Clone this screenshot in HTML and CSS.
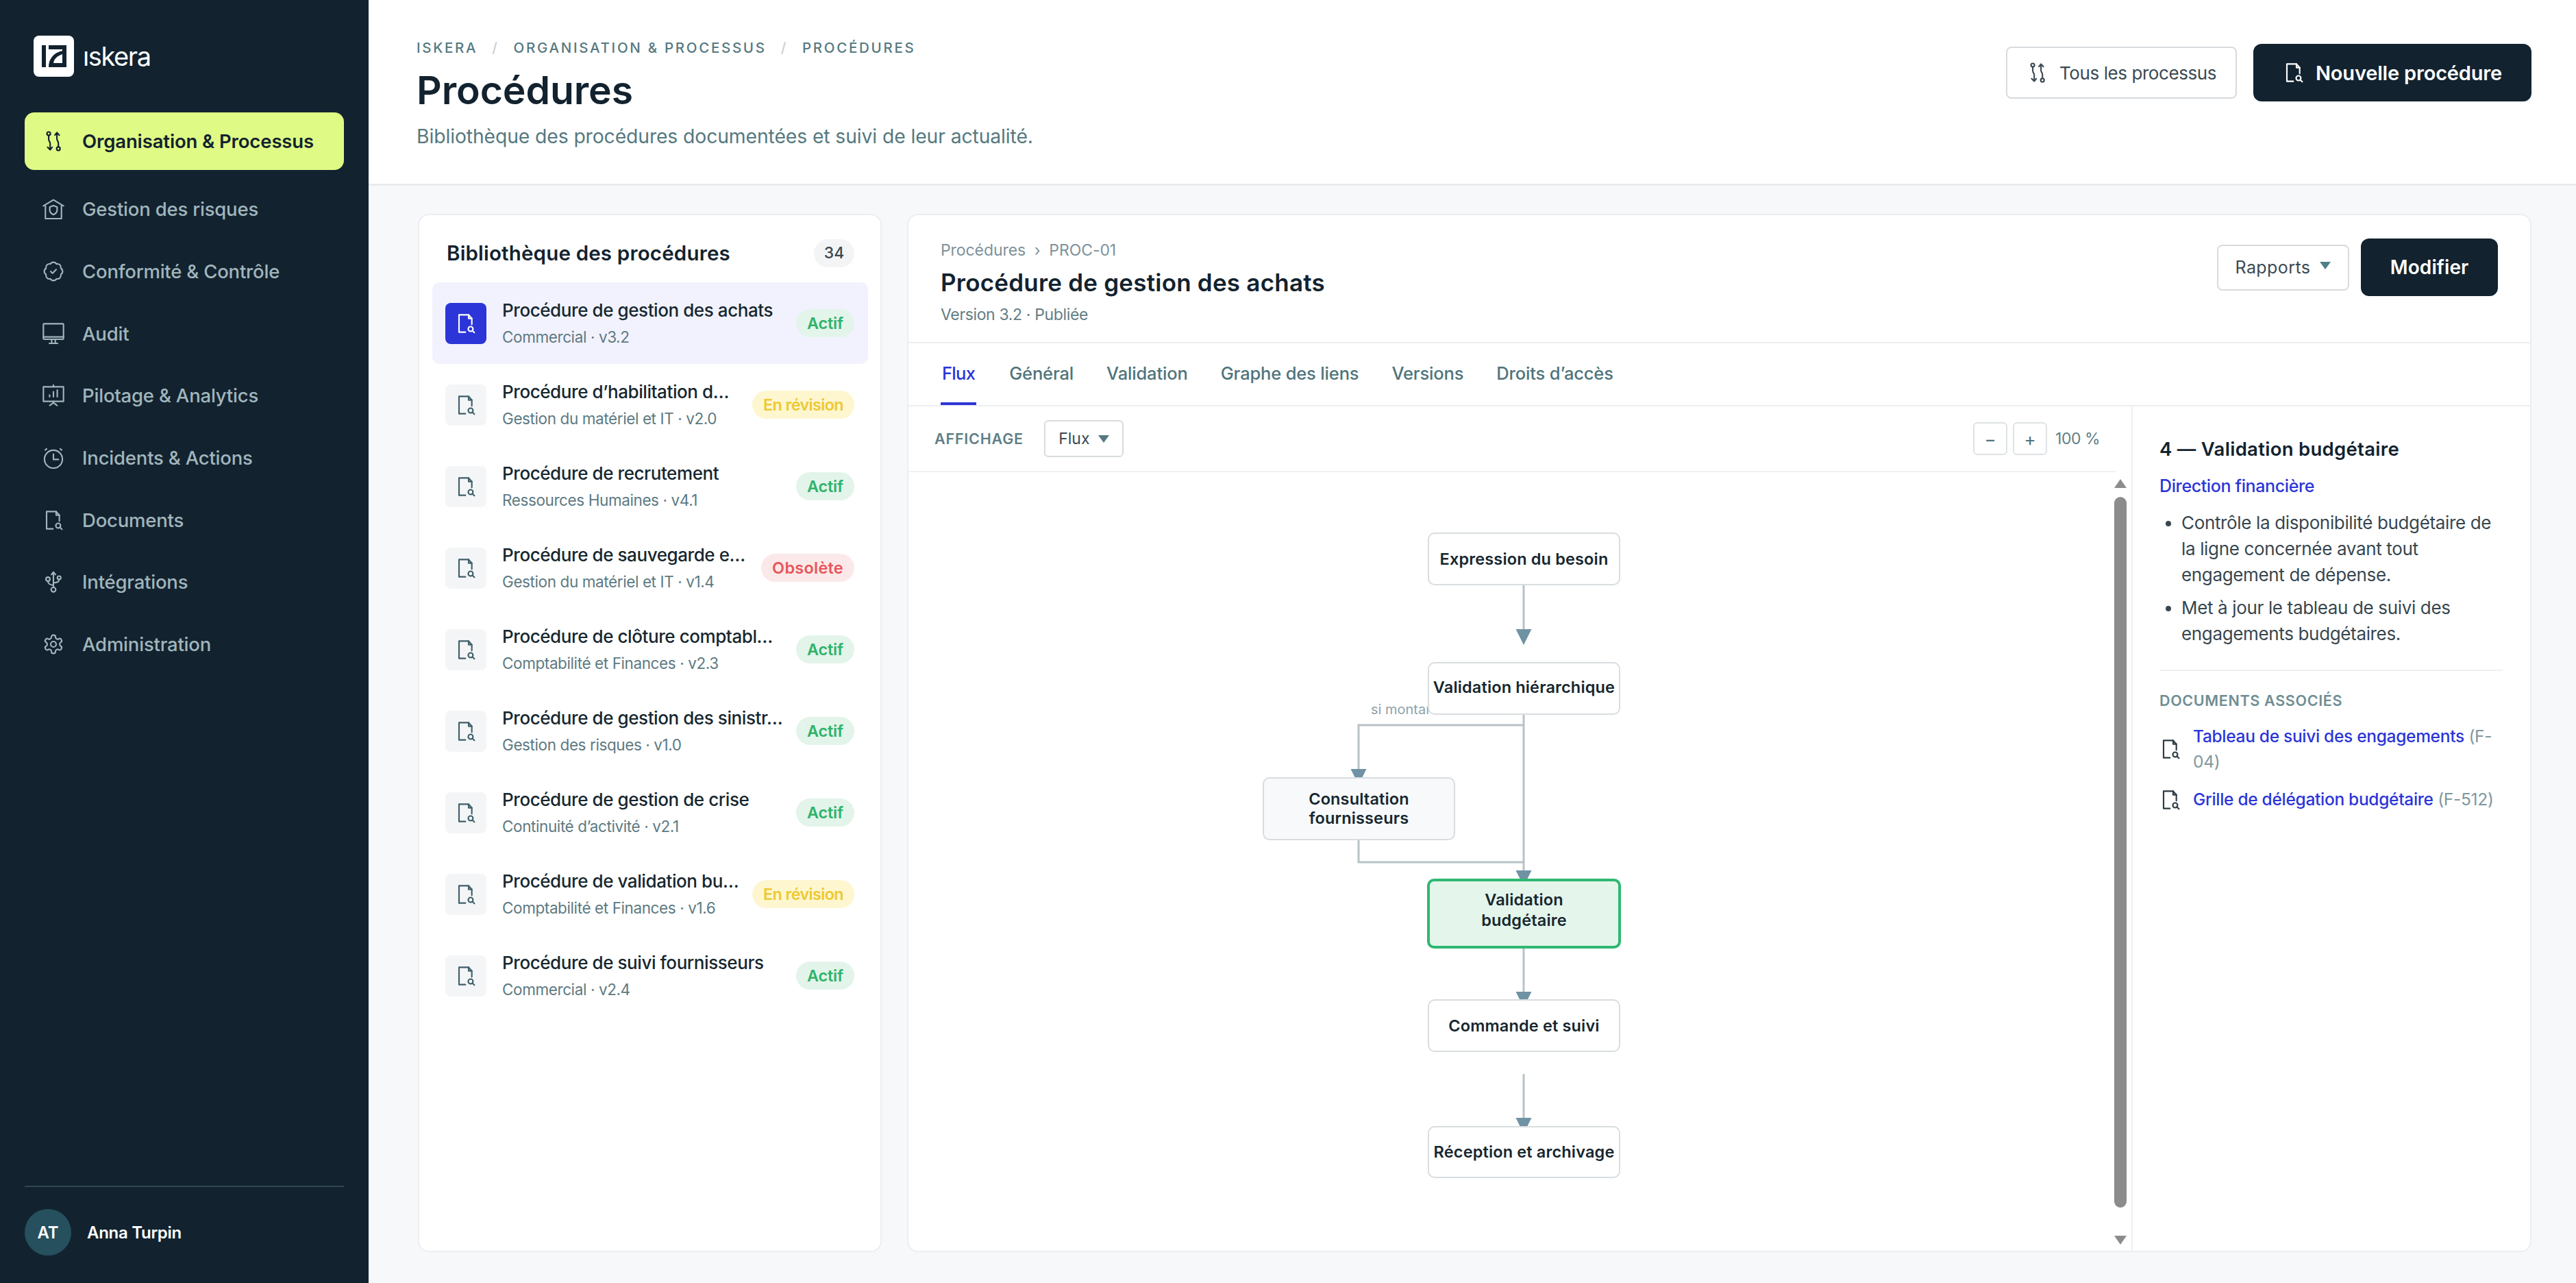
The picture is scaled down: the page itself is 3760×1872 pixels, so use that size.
FILE: index.html
```html
<!DOCTYPE html>
<html lang="fr">
<head>
<meta charset="utf-8">
<title>Procédures — Iskera</title>
<link rel="stylesheet" href="styles.css">
</head>
<body>
<svg class="defs" aria-hidden="true">
  <symbol id="i-doc" viewBox="0 0 24 24"><path d="M11.5 21.5H4.5V2.5H15L18.5 6.5V13"/><path d="M15 2.5V6.5H18.5"/><circle cx="17.2" cy="18" r="2.6"/><path d="M19.1 19.9L21.3 22"/></symbol>
  <symbol id="i-proc" viewBox="0 0 24 24"><circle cx="6.8" cy="3.8" r="1.9"/><path d="M6.8 5.7V10c0 2 1.6 2.6 1.6 4.6V21"/><path d="M5.6 18.6L8.4 21.4 10.6 18.6"/><circle cx="17.4" cy="20.2" r="1.9"/><path d="M17.4 18.3V14c0-2-1.6-2.6-1.6-4.6V3"/><path d="M13.6 5.4L15.8 2.6 18.4 5.4"/></symbol>
  <symbol id="i-risk" viewBox="0 0 24 24"><path d="M1 8.5L12 2l11 6.500"/><path d="M3.200 8.500V22.500H20.800V8.500"/><path d="M12 8.300l4 1.500v3.600c0 2.600-2 3.900-4 4.800-2-.9-4-2.200-4-4.800V9.800z"/></symbol>
  <symbol id="i-check" viewBox="0 0 24 24"><path d="M3.850 8.620a4 4 0 0 1 4.780-4.770 4 4 0 0 1 6.740 0 4 4 0 0 1 4.780 4.780 4 4 0 0 1 0 6.740 4 4 0 0 1-4.770 4.780 4 4 0 0 1-6.750 0 4 4 0 0 1-4.780-4.770 4 4 0 0 1 0-6.760Z"/><path d="M9 12l2 2 4-4"/></symbol>
  <symbol id="i-monitor" viewBox="0 0 24 24"><rect x="1" y="1" width="22" height="17" rx="0.800"/><path d="M1 15.500H23M10 18v4M14 18v4M7.500 22.500h9"/></symbol>
  <symbol id="i-chart" viewBox="0 0 24 24"><path d="M12 0v2.500"/><rect x="1" y="2.500" width="22" height="16"/><path d="M7.800 13.500v-2M12 13.500V8M16.200 13.500V6"/><path d="M12 18.500v1.500M8 23l4-3 4 3"/></symbol>
  <symbol id="i-alarm" viewBox="0 0 24 24"><circle cx="12" cy="13.500" r="9.800"/><path d="M12 8v5.800h5.500M4.500 2.200L3 3.500M19.500 2.200L21 3.500"/></symbol>
  <symbol id="i-usb" viewBox="0 0 24 24"><path d="M12 18V1.500M9.800 4L12 1.300 14.200 4"/><circle cx="12" cy="20.500" r="2.500"/><circle cx="6" cy="9" r="2.200"/><path d="M6 11.200c0 2.600 2.600 4.300 6 4.300"/><circle cx="18.200" cy="7.500" r="1.900"/><path d="M18.200 9.400c0 2.800-2.600 3.600-6.200 3.600"/></symbol>
  <symbol id="i-gear" viewBox="0 0 24 24"><path d="M12.220 2h-.44a2 2 0 0 0-2 2v.18a2 2 0 0 1-1 1.730l-.43.250a2 2 0 0 1-2 0l-.15-.08a2 2 0 0 0-2.730.730l-.22.380a2 2 0 0 0 .730 2.730l.15.100a2 2 0 0 1 1 1.720v.510a2 2 0 0 1-1 1.740l-.15.090a2 2 0 0 0-.730 2.730l.22.380a2 2 0 0 0 2.730.730l.15-.08a2 2 0 0 1 2 0l.43.250a2 2 0 0 1 1 1.730V20a2 2 0 0 0 2 2h.44a2 2 0 0 0 2-2v-.18a2 2 0 0 1 1-1.730l.43-.25a2 2 0 0 1 2 0l.15.080a2 2 0 0 0 2.730-.730l.22-.39a2 2 0 0 0-.73-2.730l-.15-.08a2 2 0 0 1-1-1.740v-.5a2 2 0 0 1 1-1.740l.15-.09a2 2 0 0 0 .73-2.730l-.22-.38a2 2 0 0 0-2.730-.73l-.15.08a2 2 0 0 1-2 0l-.43-.25a2 2 0 0 1-1-1.730V4a2 2 0 0 0-2-2z"/><circle cx="12" cy="12" r="3"/></symbol>
</svg>
<div class="app">
  <aside class="sidebar">
    <div class="brand">
      <svg class="brand-mark" viewBox="0 0 59 60"><rect width="59" height="60" rx="8" fill="#fff"/><rect x="12" y="14" width="6" height="32" fill="#12232f"/><path d="M22 14h26v32H22c0-12 7-21 20-24v-2H22z" fill="#12232f"/><path d="M29 40c1-6 5-10 13-13v13z" fill="#fff"/></svg>
      <span class="brand-name">ıskera</span>
    </div>
    <nav class="nav">
      <a class="nav-item active"><svg class="ico"><use href="#i-proc"/></svg><span>Organisation &amp; Processus</span></a>
      <a class="nav-item"><svg class="ico"><use href="#i-risk"/></svg><span>Gestion des risques</span></a>
      <a class="nav-item"><svg class="ico"><use href="#i-check"/></svg><span>Conformité &amp; Contrôle</span></a>
      <a class="nav-item"><svg class="ico"><use href="#i-monitor"/></svg><span>Audit</span></a>
      <a class="nav-item"><svg class="ico"><use href="#i-chart"/></svg><span>Pilotage &amp; Analytics</span></a>
      <a class="nav-item"><svg class="ico"><use href="#i-alarm"/></svg><span>Incidents &amp; Actions</span></a>
      <a class="nav-item"><svg class="ico"><use href="#i-doc"/></svg><span>Documents</span></a>
      <a class="nav-item"><svg class="ico"><use href="#i-usb"/></svg><span>Intégrations</span></a>
      <a class="nav-item"><svg class="ico"><use href="#i-gear"/></svg><span>Administration</span></a>
    </nav>
    <div class="user">
      <span class="avatar">AT</span>
      <span class="user-name">Anna Turpin</span>
    </div>
  </aside>
  <main class="main">
    <header class="page-head">
      <div class="page-head-text">
        <div class="crumbs"><span>ISKERA</span><i>/</i><span>ORGANISATION &amp; PROCESSUS</span><i>/</i><span>PROCÉDURES</span></div>
        <h1 class="page-title">Procédures</h1>
        <p class="page-sub">Bibliothèque des procédures documentées et suivi de leur actualité.</p>
      </div>
      <div class="page-actions">
        <button class="btn-ghost"><svg class="ico-btn"><use href="#i-proc"/></svg><span>Tous les processus</span></button>
        <button class="btn-dark"><svg class="ico-btn"><use href="#i-doc"/></svg><span>Nouvelle procédure</span></button>
      </div>
    </header>
    <div class="content">
      <section class="library">
        <div class="lib-head"><h2 class="lib-title">Bibliothèque des procédures</h2><span class="count">34</span></div>
        <ul class="proc-list">
          <li class="proc current"><span class="proc-ico"><svg><use href="#i-doc"/></svg></span><div class="proc-text"><div class="proc-name">Procédure de gestion des achats</div><div class="proc-meta">Commercial · v3.2</div></div><span class="badge ok">Actif</span></li>
          <li class="proc"><span class="proc-ico"><svg><use href="#i-doc"/></svg></span><div class="proc-text"><div class="proc-name">Procédure d’habilitation d…</div><div class="proc-meta">Gestion du matériel et IT · v2.0</div></div><span class="badge warn">En révision</span></li>
          <li class="proc"><span class="proc-ico"><svg><use href="#i-doc"/></svg></span><div class="proc-text"><div class="proc-name">Procédure de recrutement</div><div class="proc-meta">Ressources Humaines · v4.1</div></div><span class="badge ok">Actif</span></li>
          <li class="proc"><span class="proc-ico"><svg><use href="#i-doc"/></svg></span><div class="proc-text"><div class="proc-name">Procédure de sauvegarde e…</div><div class="proc-meta">Gestion du matériel et IT · v1.4</div></div><span class="badge bad">Obsolète</span></li>
          <li class="proc"><span class="proc-ico"><svg><use href="#i-doc"/></svg></span><div class="proc-text"><div class="proc-name">Procédure de clôture comptabl…</div><div class="proc-meta">Comptabilité et Finances · v2.3</div></div><span class="badge ok">Actif</span></li>
          <li class="proc"><span class="proc-ico"><svg><use href="#i-doc"/></svg></span><div class="proc-text"><div class="proc-name">Procédure de gestion des sinistr…</div><div class="proc-meta">Gestion des risques · v1.0</div></div><span class="badge ok">Actif</span></li>
          <li class="proc"><span class="proc-ico"><svg><use href="#i-doc"/></svg></span><div class="proc-text"><div class="proc-name">Procédure de gestion de crise</div><div class="proc-meta">Continuité d’activité · v2.1</div></div><span class="badge ok">Actif</span></li>
          <li class="proc"><span class="proc-ico"><svg><use href="#i-doc"/></svg></span><div class="proc-text"><div class="proc-name">Procédure de validation bu…</div><div class="proc-meta">Comptabilité et Finances · v1.6</div></div><span class="badge warn">En révision</span></li>
          <li class="proc"><span class="proc-ico"><svg><use href="#i-doc"/></svg></span><div class="proc-text"><div class="proc-name">Procédure de suivi fournisseurs</div><div class="proc-meta">Commercial · v2.4</div></div><span class="badge ok">Actif</span></li>
        </ul>
      </section>
      <section class="detail">
        <div class="detail-head">
          <div>
            <div class="detail-crumb">Procédures&nbsp; ›&nbsp; PROC-01</div>
            <h2 class="detail-title">Procédure de gestion des achats</h2>
            <div class="detail-version">Version 3.2 · Publiée</div>
          </div>
          <div class="detail-actions">
            <button class="btn-report"><span>Rapports</span><b class="caret"></b></button>
            <button class="btn-edit"><span>Modifier</span></button>
          </div>
        </div>
        <div class="tabs">
          <a class="tab active">Flux</a><a class="tab">Général</a><a class="tab">Validation</a><a class="tab">Graphe des liens</a><a class="tab">Versions</a><a class="tab">Droits d’accès</a>
        </div>
        <div class="detail-body">
          <div class="flow-col">
            <div class="toolbar">
              <span class="tool-label">AFFICHAGE</span>
              <span class="select">Flux<b class="caret"></b></span>
              <span class="tool-right">
                <button class="zoom-btn">−</button>
                <button class="zoom-btn">+</button>
                <span class="zoom-val">100 %</span>
              </span>
            </div>
            <div class="canvas">
              <span class="edge-label">si montant &gt; seuil</span>
              <svg class="edges" viewBox="0 0 1786 1136">
                <g class="edge-lines">
                  <path d="M898 165V231"/>
                  <path d="M898 353V584"/>
                  <path d="M898 369H657V435"/>
                  <path d="M657 537V569H898"/>
                  <path d="M898 695V760"/>
                  <path d="M898 878V944"/>
                </g>
                <g class="edge-heads">
                  <polygon points="886.500,229 909.500,229 898,252"/>
                  <polygon points="645.500,433 668.500,433 657,456"/>
                  <polygon points="886.500,581 909.500,581 898,604"/>
                  <polygon points="886.500,758 909.500,758 898,781"/>
                  <polygon points="886.500,942 909.500,942 898,965"/>
                </g>
              </svg>
              <div class="node n1"><span>Expression du besoin</span></div>
              <div class="node n2"><span>Validation hiérarchique</span></div>
              <div class="node n3"><span>Consultation<br>fournisseurs</span></div>
              <div class="node n4"><span>Validation<br>budgétaire</span></div>
              <div class="node n5"><span>Commande et suivi</span></div>
              <div class="node n6"><span>Réception et archivage</span></div>
              <div class="scrollbar"><b class="sb-up"></b><b class="sb-thumb"></b><b class="sb-down"></b></div>
            </div>
          </div>
          <aside class="side">
            <h3 class="side-title">4 — Validation budgétaire</h3>
            <a class="side-owner">Direction financière</a>
            <ul class="side-list">
              <li>Contrôle la disponibilité budgétaire de la ligne concernée avant tout engagement de dépense.</li>
              <li>Met à jour le tableau de suivi des engagements budgétaires.</li>
            </ul>
            <hr class="side-rule">
            <h4 class="side-heading">DOCUMENTS ASSOCIÉS</h4>
            <div class="side-doc"><svg><use href="#i-doc"/></svg><span><a>Tableau de suivi des engagements</a> <em>(F-04)</em></span></div>
            <div class="side-doc"><svg><use href="#i-doc"/></svg><span><a>Grille de délégation budgétaire</a> <em>(F-512)</em></span></div>
          </aside>
        </div>
      </section>
    </div>
  </main>
</div>
</body>
</html>
```
FILE: styles.css
```css
* { box-sizing: border-box; }
html, body { margin: 0; height: 100%; }
body { font-family: Inter, "Noto Sans", "Liberation Sans", sans-serif; color: #12232f; background: #f7f8fa; }
h1, h2, h3, h4, p, ul { margin: 0; padding: 0; }
button { font: inherit; cursor: pointer; }
.defs { position: absolute; width: 0; height: 0; }
svg use { fill: none; stroke: currentColor; stroke-width: 1.6; stroke-linecap: round; stroke-linejoin: round; }

.app { display: flex; height: 100vh; }

/* Sidebar */
.sidebar { width: 538px; flex: none; background: #12232f; display: flex; flex-direction: column; padding: 52px 36px 40px; }
.brand { display: flex; align-items: center; gap: 13px; padding-left: 13px; }
.brand-mark { width: 59px; height: 60px; }
.brand-name { color: #fff; font-size: 38px; font-weight: 400; letter-spacing: -1.400px; line-height: 60px; }
.nav { display: flex; flex-direction: column; margin-top: 52px; flex: 1; }
.nav-item { display: flex; align-items: center; gap: 26px; height: 90.700px; padding-left: 26px; color: #a1b5bd; font-size: 27.500px; font-weight: 500; letter-spacing: -0.200px; }
.nav-item.active { height: 84px; margin-bottom: 12px; background: #e0fb85; border-radius: 14px; color: #12232f; font-weight: 600; letter-spacing: -0.130px; }
.ico { width: 32px; height: 32px; flex: none; }
.user { border-top: 2px solid #2f4753; display: flex; align-items: center; gap: 23px; padding-top: 32px; }
.avatar { width: 68px; height: 68px; border-radius: 50%; background: #27505f; color: #fff; font-size: 24px; font-weight: 600; display: flex; align-items: center; justify-content: center; }
.user-name { color: #fff; font-size: 24px; font-weight: 600; letter-spacing: -0.290px; }

/* Page header */
.main { flex: 1; min-width: 0; display: flex; flex-direction: column; }
.page-head { height: 271px; flex: none; background: #fff; border-bottom: 3px solid #e9ebee; display: flex; justify-content: space-between; padding: 0 65px 0 70px; }
.page-head-text { padding-top: 58px; }
.crumbs { display: flex; align-items: center; gap: 21px; font-size: 20.500px; line-height: 24px; font-weight: 500; letter-spacing: 2.700px; color: #55797f; }
.crumbs i { font-style: normal; color: #c9ced1; }
.page-title { font-size: 57px; line-height: 70px; font-weight: 600; margin-top: 15px; color: #12232f; letter-spacing: -0.060px; }
.page-sub { font-size: 28.300px; line-height: 40px; margin-top: 12px; color: #55797f; letter-spacing: -0.100px; }
.page-actions { display: flex; align-items: center; gap: 24px; height: 84px; margin-top: 64px; }
.btn-ghost { height: 76px; width: 337px; background: #fff; border: 2px solid #d8dbde; border-radius: 8px; color: #3b4a52; font-size: 26px; letter-spacing: -0.430px; display: flex; align-items: center; justify-content: center; gap: 16px; }
.btn-dark { height: 84px; width: 406px; background: #12232f; border: 0; border-radius: 12px; color: #fff; font-size: 29px; font-weight: 600; letter-spacing: -0.180px; display: flex; align-items: center; justify-content: center; gap: 16px; }
.ico-btn { width: 32px; height: 32px; flex: none; }

/* Content */
.content { flex: 1; min-height: 0; display: flex; gap: 37px; padding: 41px 65px 45px 72px; }
.library, .detail { background: #fff; border: 2px solid #eceef1; border-radius: 16px; }
.library { width: 677px; flex: none; padding: 0 18px 0 19px; }
.lib-head { display: flex; align-items: center; justify-content: space-between; height: 98px; padding: 12px 20px 0 21px; }
.lib-title { font-size: 29.500px; font-weight: 600; letter-spacing: 0.180px; }
.count { min-width: 59px; height: 41px; border-radius: 21px; background: #f2f4f6; font-size: 23px; font-weight: 500; color: #3b4a52; display: flex; align-items: center; justify-content: center; }
.proc-list { list-style: none; }
.proc { height: 119px; display: flex; align-items: center; gap: 20px; padding: 0 20px 0 19px; border-radius: 10px; }
.proc.current { background: #f1f2fd; }
.proc-ico { width: 60px; height: 60px; flex: none; background: #f4f5f7; border-radius: 8px; color: #3f5f6a; display: flex; align-items: center; justify-content: center; }
.proc-ico svg { width: 32px; height: 32px; }
.current .proc-ico { background: #2b35d8; color: #fff; }
.proc-text { flex: 1; min-width: 0; padding-left: 3px; }
.proc-name { font-size: 26px; line-height: 36px; font-weight: 500; letter-spacing: -0.420px; white-space: nowrap; color: #16272f; }
.proc-meta { font-size: 22.500px; line-height: 32px; margin-top: 5px; letter-spacing: -0.400px; color: #5d7a82; white-space: nowrap; }
.badge { flex: none; height: 41px; padding: 0 16px; border-radius: 21px; font-size: 23.400px; font-weight: 600; display: flex; align-items: center; }
.badge.ok { background: #e3f5ea; color: #2fb36a; letter-spacing: -0.150px; }
.badge.warn { background: #fdf6cf; color: #eec932; letter-spacing: -0.630px; }
.badge.bad { background: #fbe8e8; color: #e8555a; letter-spacing: 0.300px; }

/* Detail */
.detail { flex: 1; min-width: 0; display: flex; flex-direction: column; overflow: hidden; }
.detail-head { height: 187px; flex: none; border-bottom: 2px solid #eceef1; display: flex; justify-content: space-between; align-items: flex-start; padding: 34px 47px 0 47px; }
.detail-crumb { font-size: 23px; line-height: 32px; color: #7d929a; letter-spacing: -0.080px; margin-top: 1px; }
.detail-title { font-size: 35px; line-height: 46px; font-weight: 600; margin-top: 8px; letter-spacing: 0.220px; }
.detail-version { font-size: 23px; line-height: 32px; margin-top: 8px; color: #637d85; letter-spacing: -0.360px; }
.detail-actions { display: flex; align-items: center; gap: 17px; height: 84px; }
.btn-report { width: 193px; height: 67px; background: #fff; border: 2px solid #d8dbde; border-radius: 8px; color: #3b4a52; font-size: 25px; letter-spacing: 0.430px; display: flex; align-items: center; justify-content: center; gap: 14px; }
.btn-report .caret { color: #4f8088; margin-bottom: 6px; }
.btn-edit { width: 200px; height: 84px; background: #12232f; border: 0; border-radius: 12px; color: #fff; font-size: 28px; font-weight: 600; letter-spacing: 0.100px; }
.caret { width: 0; height: 0; border-left: 8px solid transparent; border-right: 8px solid transparent; border-top: 11px solid currentColor; }
.tabs { height: 92px; flex: none; border-bottom: 2px solid #eceef1; display: flex; gap: 48px; padding-left: 47px; }
.tab { height: 90px; padding-bottom: 4px; display: flex; align-items: center; font-size: 25.500px; font-weight: 500; letter-spacing: -0.160px; color: #4f747b; }
.tab.active { color: #2b35d8; border-bottom: 4px solid #2b35d8; padding: 0 2px; letter-spacing: -0.700px; }
.detail-body { flex: 1; min-height: 0; display: flex; }
.flow-col { flex: 1; min-width: 0; display: flex; flex-direction: column; }
.toolbar { height: 96px; flex: none; margin-right: 23px; border-bottom: 2px solid #f1f2f4; display: flex; align-items: center; padding: 0 23px 0 38px; }
.tool-label { font-size: 21.500px; font-weight: 600; letter-spacing: 0.800px; color: #5f7f87; }
.select { margin-left: 30px; width: 116px; height: 54px; border: 2px solid #d8dcdf; border-radius: 6px; font-size: 23px; color: #3b4a52; display: flex; align-items: center; justify-content: center; gap: 12px; }
.select .caret { color: #55797f; }
.tool-right { margin-left: auto; display: flex; align-items: center; gap: 8px; }
.zoom-btn { width: 50px; height: 48px; background: #fff; border: 2px solid #dfe3e5; border-radius: 6px; padding: 0; color: #4f747b; font-size: 26px; }
.zoom-val { margin-left: 4px; font-size: 23px; letter-spacing: -0.490px; color: #5f7f87; }
.canvas { flex: 1; min-height: 0; position: relative; overflow: hidden; }
.edges { position: absolute; left: 0; top: 0; width: 1786px; height: 1136px; }
.edge-lines path { fill: none; stroke: #b8c2c7; stroke-width: 3; }
.edge-heads polygon { fill: #6f93a3; }
.edge-label { position: absolute; left: 675px; top: 332px; line-height: 28px; font-size: 20px; color: #8ea3aa; white-space: nowrap; }
.node { position: absolute; width: 281px; background: #fff; border: 2px solid #d8dde0; border-radius: 10px; display: flex; align-items: center; justify-content: center; text-align: center; font-size: 23.500px; font-weight: 600; letter-spacing: 0.150px; line-height: 28px; color: #16272f; white-space: nowrap; }
.n1 { left: 758px; top: 88px; height: 77px; }
.n2 { left: 758px; top: 277px; height: 77px; padding-bottom: 3px; }
.n3 { left: 517px; top: 445px; height: 92px; background: #f7f9fb; }
.n4 { left: 757px; top: 593px; height: 102px; width: 283px; background: #e4f5ec; border: 4px solid #2fb872; line-height: 30px; padding-bottom: 10px; }
.n5 { left: 758px; top: 769px; height: 77px; }
.n6 { left: 758px; top: 954px; height: 76px; }
.scrollbar { position: absolute; right: 7px; top: 10px; bottom: 9px; width: 18px; display: flex; flex-direction: column; align-items: center; }
.sb-up { width: 0; height: 0; border-left: 9px solid transparent; border-right: 9px solid transparent; border-bottom: 13px solid #8c8c8c; }
.sb-thumb { width: 18px; height: 1037px; margin-top: 13px; background: #8c8c8c; border-radius: 9px; }
.sb-down { width: 0; height: 0; margin-top: auto; border-left: 9px solid transparent; border-right: 9px solid transparent; border-top: 13px solid #8c8c8c; }

/* Side panel */
.side { width: 582px; flex: none; border-left: 2px solid #eef0f2; padding: 42px 40px 0 39px; }
.side-title { font-size: 27.500px; line-height: 40px; font-weight: 600; letter-spacing: 0.290px; }
.side-owner { display: block; margin-top: 16px; font-size: 25px; line-height: 36px; font-weight: 500; letter-spacing: -0.380px; color: #2b35d8; }
.side-list { margin-top: 17px; padding-left: 32px; font-size: 26px; line-height: 38px; letter-spacing: -0.350px; color: #38474f; }
.side-list li + li { margin-top: 10px; }
.side-rule { border: 0; height: 2px; background: #eef0f2; margin: 33px 0 0; }
.side-heading { margin-top: 29px; font-size: 21.500px; line-height: 28px; font-weight: 600; letter-spacing: 0.660px; color: #6f8e94; }
.side-doc { display: flex; align-items: center; gap: 17px; margin-top: 18px; font-size: 24.500px; line-height: 37px; letter-spacing: -0.300px; }
.side-heading + .side-doc { margin-top: 20px; }
.side-doc svg { width: 32px; height: 32px; flex: none; color: #2a3a42; }
.side-doc a { color: #2b35d8; font-weight: 500; }
.side-doc em { font-style: normal; color: #7f979e; }
```
